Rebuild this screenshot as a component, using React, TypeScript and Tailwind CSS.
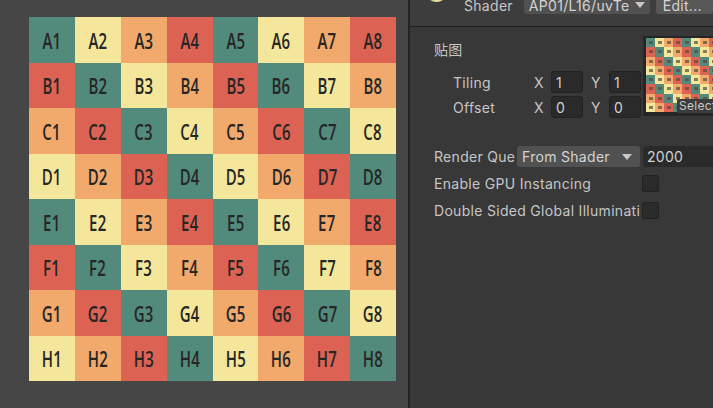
import React from "react";

const COLORS = ["bg-[#528b7c]", "bg-[#f4e79b]", "bg-[#f1a96c]", "bg-[#dc6253]"];
const ROWS = ["A", "B", "C", "D", "E", "F", "G", "H"];

function colorFor(r: number, c: number) {
  return COLORS[(((c - r) % 4) + 4) % 4];
}

function BigGrid() {
  return (
    <div className="grid grid-cols-8 grid-rows-8 w-[367px] h-[364px]">
      {ROWS.map((row, r) =>
        Array.from({ length: 8 }).map((_, c) => (
          <div key={row + c} className={`${colorFor(r, c)} flex items-center justify-center`}>
            <span
              className="inline-block scale-x-[0.68] text-[22px] font-semibold leading-none text-[#262626]"
              style={{ fontFamily: '"Open Sans", sans-serif' }}
            >
              {row}
              {c + 1}
            </span>
          </div>
        ))
      )}
    </div>
  );
}

function MiniGrid() {
  return (
    <div className="grid grid-cols-8 grid-rows-8 w-[72px] h-[74px] shrink-0">
      {ROWS.map((row, r) =>
        Array.from({ length: 8 }).map((_, c) => (
          <div key={row + c} className={`${colorFor(r, c)} flex items-center justify-center`}>
            <div className="w-[4px] h-[3px] bg-[#5a4a3a] opacity-70" />
          </div>
        ))
      )}
    </div>
  );
}

function NumBox({ v, w }: { v: string; w: string }) {
  return (
    <div className={`${w} h-[22px] rounded-[3px] bg-[#2a2a2a] border border-[#222] flex items-center pl-[4px] text-[#d2d2d2]`}>
      {v}
    </div>
  );
}

function Check() {
  return <div className="w-[17px] h-[17px] rounded-[2px] bg-[#2b2b2b] border border-[#222]" />;
}

export default function App() {
  return (
    <div
      className="w-[713px] h-[408px] flex overflow-hidden bg-[#464646] text-[14px] tracking-[0.3px] text-[#c6c6c6]"
      style={{ fontFamily: 'Inter, "Noto Sans CJK SC", sans-serif' }}
    >
      {/* Left scene view */}
      <div className="w-[408px] shrink-0 pl-[29px] pt-[17px]">
        <BigGrid />
      </div>
      <div className="w-[2px] shrink-0 bg-[#232323]" />
      {/* Right inspector */}
      <div className="flex-1 bg-[#383838] flex flex-col min-w-0">
        <div className="h-[27px] shrink-0 bg-[#3d3d3d] border-b border-[#1f1f1f] relative">
          <div className="flex items-start h-[18px] -mt-[4px] pl-[15px]">
            <div
              className="w-[23px] h-[23px] rounded-full -mt-[17px] shrink-0"
              style={{ background: "conic-gradient(#dc6253, #f1a96c, #f4e79b, #528b7c, #dc6253)" }}
            />
            <div className="ml-[16px] w-[63px] h-[18px] flex items-center">Shader</div>
            <div className="w-[132px] h-[18px] rounded-[3px] bg-[#515151] flex items-center pl-[5px] pr-[5px] text-[#d4d4d4]">
              <span className="flex-1 overflow-hidden whitespace-nowrap">AP01/L16/uvTe</span>
              <svg width="10" height="6" viewBox="0 0 10 6" className="shrink-0">
                <path d="M0 0 L10 0 L5 6 Z" fill="#c8c8c8" />
              </svg>
            </div>
            <div className="ml-[6px] w-[60px] h-[18px] rounded-[3px] bg-[#585858] flex items-center pl-[7px] text-[#d4d4d4] whitespace-nowrap">
              Edit...
            </div>
          </div>
        </div>
        <div className="flex-1 pl-[24px] pt-[9px]">
          <div className="flex">
            <div className="w-[209px] shrink-0">
              <div className="h-[24px] flex items-center mt-[1px]" style={{ fontFamily: '"Noto Sans CJK SC", sans-serif' }}>
                贴图
              </div>
              <div className="mt-[10px] flex items-center h-[22px]">
                <div className="w-[100px] pl-[19px]">Tiling</div>
                <div className="w-[17px]">X</div>
                <NumBox v="1" w="w-[32px]" />
                <div className="w-[26px] pl-[8px]">Y</div>
                <NumBox v="1" w="w-[32px]" />
              </div>
              <div className="mt-[3px] flex items-center h-[22px]">
                <div className="w-[100px] pl-[19px]">Offset</div>
                <div className="w-[17px]">X</div>
                <NumBox v="0" w="w-[32px]" />
                <div className="w-[26px] pl-[8px]">Y</div>
                <NumBox v="0" w="w-[32px]" />
              </div>
            </div>
            <div className="relative w-[80px] h-[80px] bg-[#262626] pl-[3px] pt-[2px] shrink-0 overflow-hidden">
              <MiniGrid />
              <div className="absolute left-[34px] top-[63px] h-[14px] w-[50px] bg-[#3c3c3c] rounded-tl-[2px] text-[12px] leading-[14px] pl-[2px] text-[#c8c8c8]">
                Select
              </div>
            </div>
          </div>
          <div className="mt-[28px] flex items-center h-[21px]">
            <div className="w-[81px] mr-[2px] overflow-hidden whitespace-nowrap">Render Queue</div>
            <div className="w-[123px] h-[21px] rounded-[3px] bg-[#515151] flex items-center pl-[5px] pr-[8px] text-[#d4d4d4]">
              <span className="flex-1 whitespace-nowrap">From Shader</span>
              <svg width="10" height="6" viewBox="0 0 10 6">
                <path d="M0 0 L10 0 L5 6 Z" fill="#c8c8c8" />
              </svg>
            </div>
            <div className="ml-[3px] flex-1 h-[21px] rounded-l-[3px] bg-[#2a2a2a] flex items-center pl-[4px] text-[#d2d2d2]">
              2000
            </div>
          </div>
          <div className="mt-[7px] flex items-center h-[18px]">
            <div className="w-[208px] overflow-hidden whitespace-nowrap">Enable GPU Instancing</div>
            <Check />
          </div>
          <div className="mt-[9px] flex items-center h-[18px]">
            <div className="w-[206px] mr-[2px] overflow-hidden whitespace-nowrap">Double Sided Global Illumination</div>
            <Check />
          </div>
        </div>
      </div>
    </div>
  );
}
